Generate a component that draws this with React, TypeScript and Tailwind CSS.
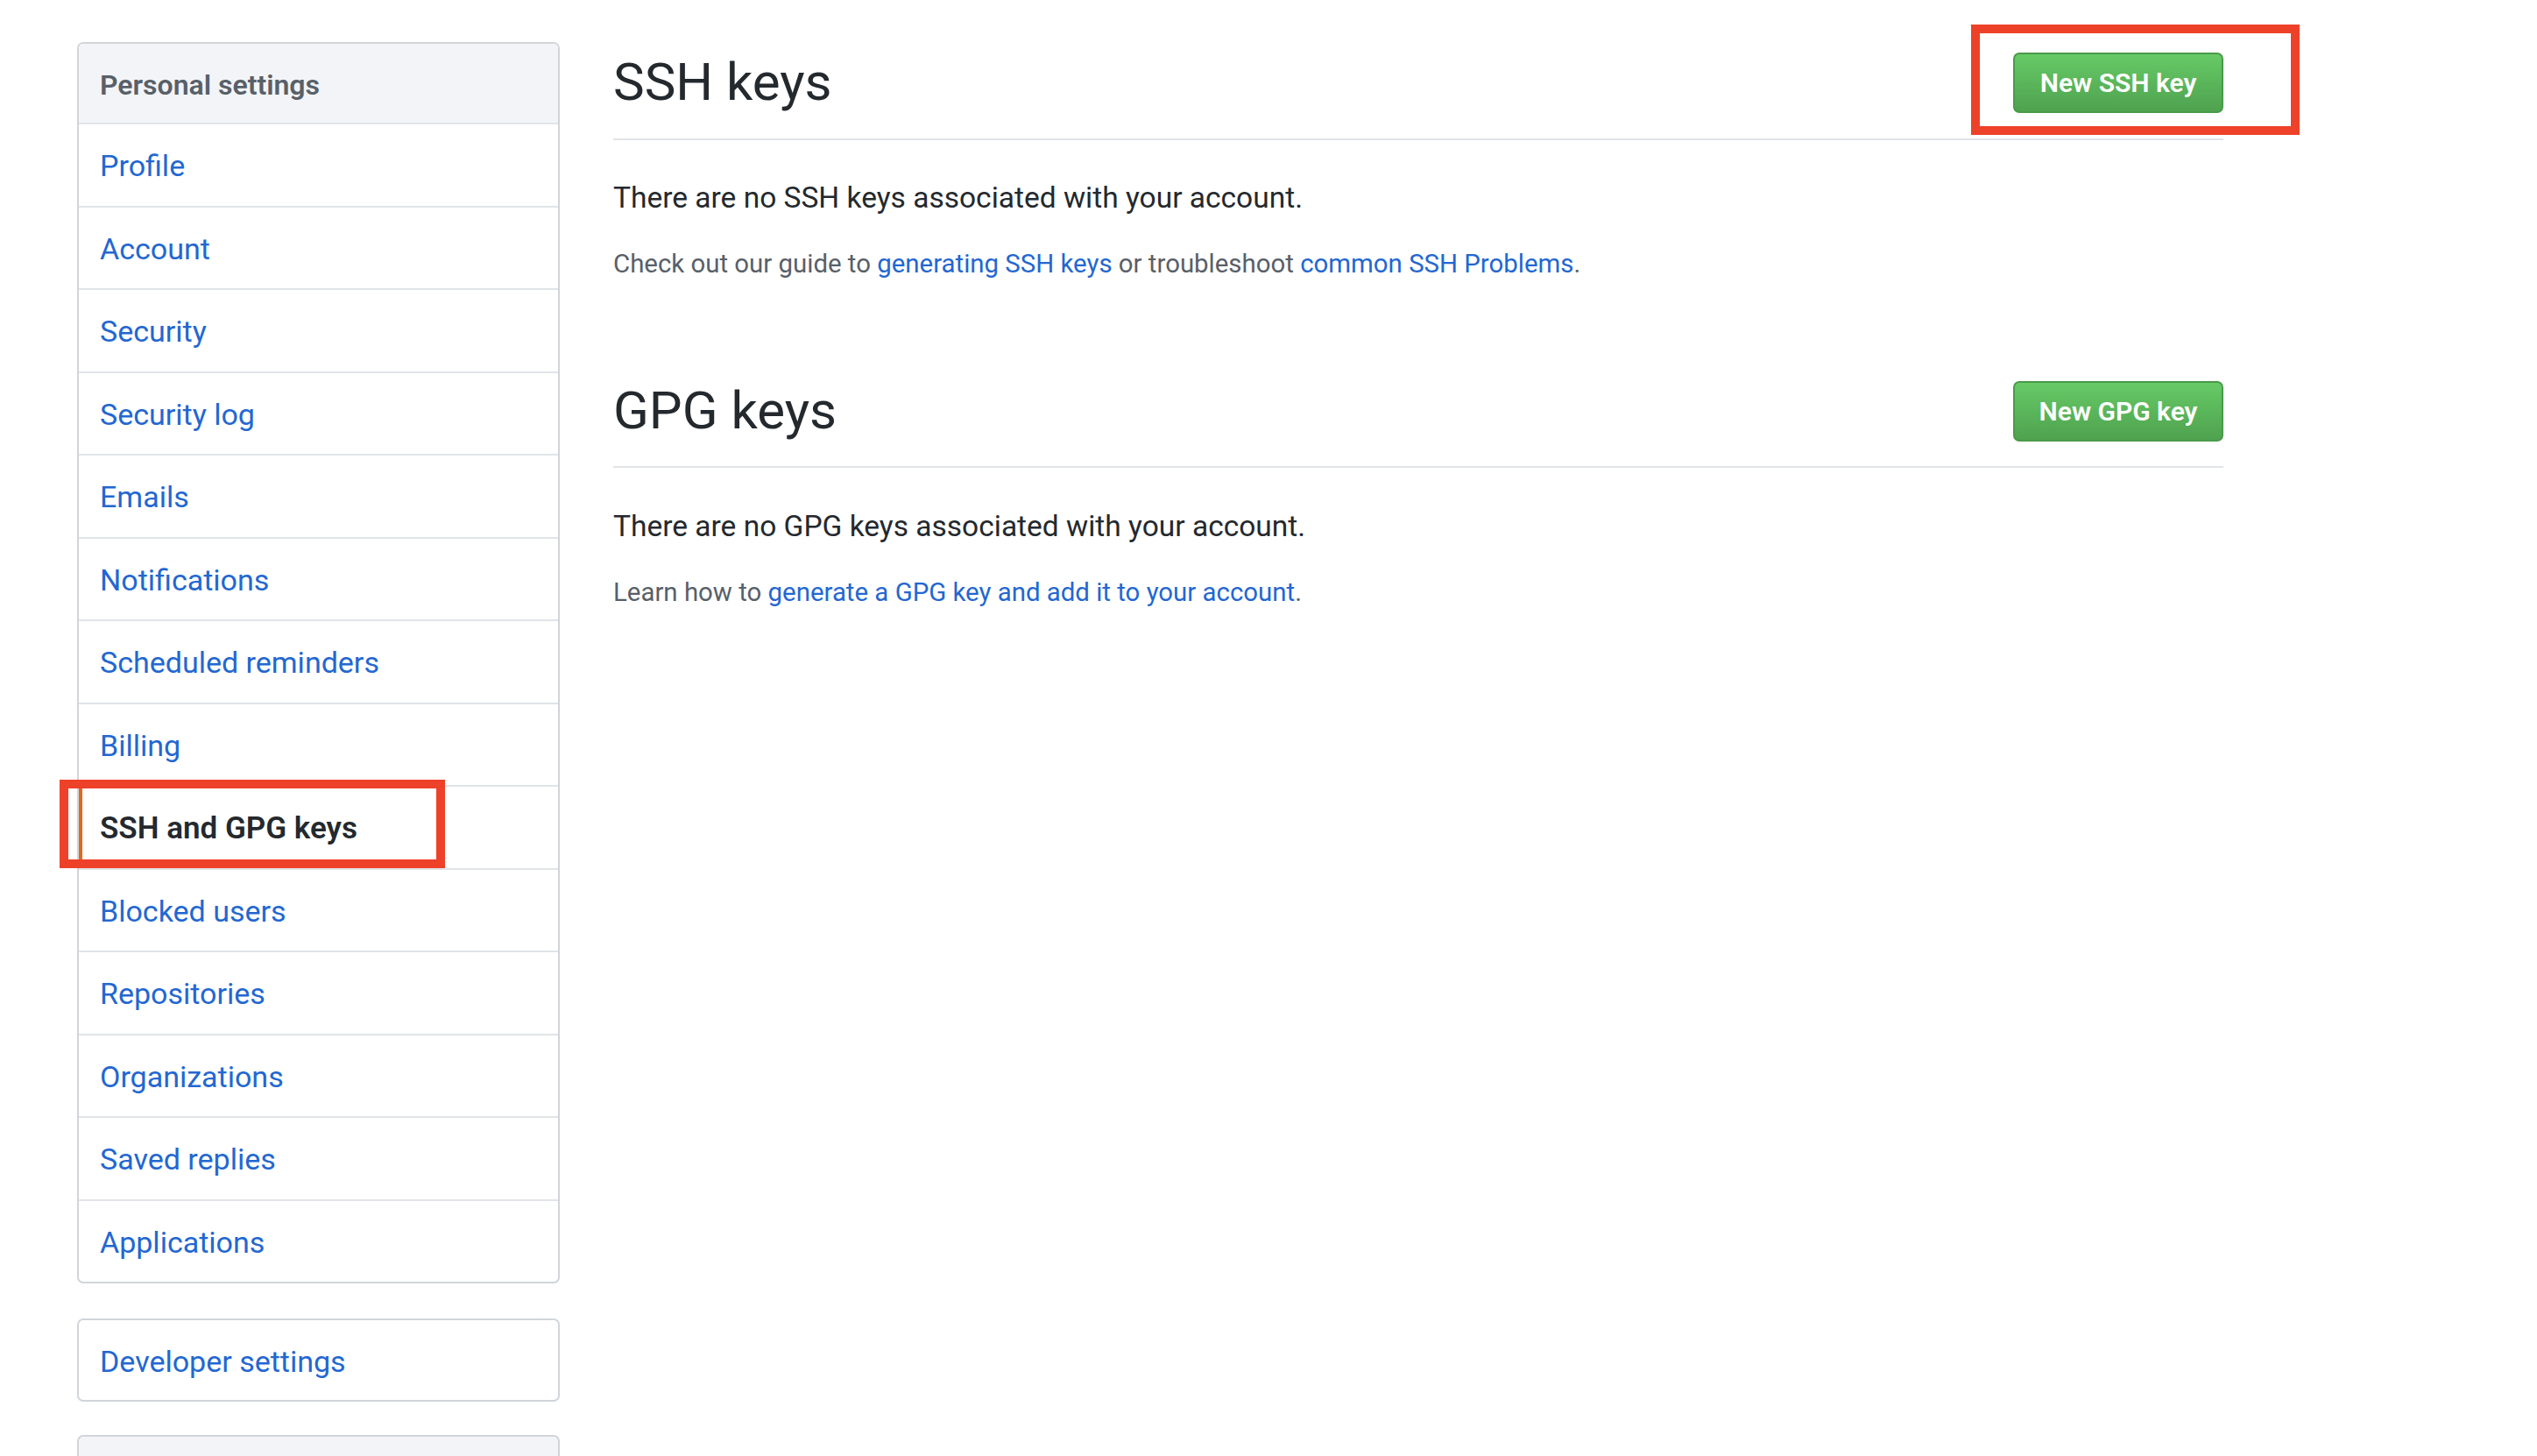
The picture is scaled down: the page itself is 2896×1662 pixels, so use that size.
import React from "react";

const items = [
  "Profile",
  "Account",
  "Security",
  "Security log",
  "Emails",
  "Notifications",
  "Scheduled reminders",
  "Billing",
  "SSH and GPG keys",
  "Blocked users",
  "Repositories",
  "Organizations",
  "Saved replies",
  "Applications",
];

const font = { fontFamily: "Roboto, 'Noto Sans', Arial, sans-serif" };

function GreenButton({ label }: { label: string }) {
  return (
    <button className="h-[69px] w-[240px] rounded-[7px] border-2 border-[#4a9a4a] bg-gradient-to-b from-[#66ca66] to-[#4fa24f] text-[30px] font-semibold text-white">
      {label}
    </button>
  );
}

export default function App() {
  return (
    <div className="relative h-[1662px] w-[2896px] overflow-hidden bg-white" style={font}>
      <div className="flex pl-[88px] pt-[48px]">
        {/* Sidebar */}
        <div className="w-[551px] shrink-0">
          <nav className="overflow-hidden rounded-[7px] border-2 border-[#d1d5da]">
            <div className="flex h-[92px] items-center border-b-2 border-[#e1e4e8] bg-[#f3f4f7] px-[24px] pt-[3px] text-[32px] font-semibold text-[#586069]">
              Personal settings
            </div>
            {items.map((it, i) => {
              const selected = it === "SSH and GPG keys";
              const last = i === items.length - 1;
              return (
                <div
                  key={it}
                  className={
                    "relative flex items-center px-[24px] pt-[3px] " +
                    (last ? "h-[92.5px] " : "h-[94.5px] border-b-2 border-[#e1e4e8] ") +
                    (selected ? "text-[35px] font-semibold text-[#24292e]" : "text-[34px] text-[#2367d1]")
                  }
                >
                  {selected && <div className="absolute bottom-0 left-0 top-0 w-[4px] bg-[#e0691f]" />}
                  {it}
                </div>
              );
            })}
          </nav>
          <div className="mt-[40px] flex h-[95px] items-center rounded-[7px] border-2 border-[#d1d5da] px-[24px] pt-[3px] text-[34px] text-[#2367d1]">
            Developer settings
          </div>
          <div className="mt-[38px] h-[100px] rounded-[7px] border-2 border-[#d1d5da] bg-[#f3f4f7]" />
        </div>

        {/* Main */}
        <main className="ml-[61px] w-[1838px] shrink-0">
          <div className="mt-[1px] flex items-center justify-between border-b-2 border-[#e1e4e8] pb-[19px]">
            <h2 className="text-[60px] leading-[90px] font-normal text-[#24292e]">SSH keys</h2>
            <GreenButton label="New SSH key" />
          </div>
          <p className="mt-[40px] text-[33.5px] leading-[52px] text-[#24292e]">
            There are no SSH keys associated with your account.
          </p>
          <p className="mt-[26px] text-[29.4px] leading-[46px] text-[#586069]">
            Check out our guide to <span className="text-[#2367d1]">generating SSH keys</span> or troubleshoot{" "}
            <span className="text-[#2367d1]">common SSH Problems</span>.
          </p>

          <div className="mt-[100px] flex items-center justify-between border-b-2 border-[#e1e4e8] pb-[18px]">
            <h2 className="text-[60px] leading-[90px] font-normal text-[#24292e]">GPG keys</h2>
            <GreenButton label="New GPG key" />
          </div>
          <p className="mt-[41px] text-[33.5px] leading-[52px] text-[#24292e]">
            There are no GPG keys associated with your account.
          </p>
          <p className="mt-[26px] text-[29.4px] leading-[46px] text-[#586069]">
            Learn how to <span className="text-[#2367d1]">generate a GPG key and add it to your account</span>.
          </p>
        </main>
      </div>

      {/* Annotation boxes */}
      <div className="pointer-events-none absolute left-[2250px] top-[28px] h-[126px] w-[375px] border-[10px] border-[#ee4129]" />
      <div className="pointer-events-none absolute left-[68px] top-[890px] h-[101px] w-[440px] border-[10px] border-[#ee4129]" />
    </div>
  );
}
